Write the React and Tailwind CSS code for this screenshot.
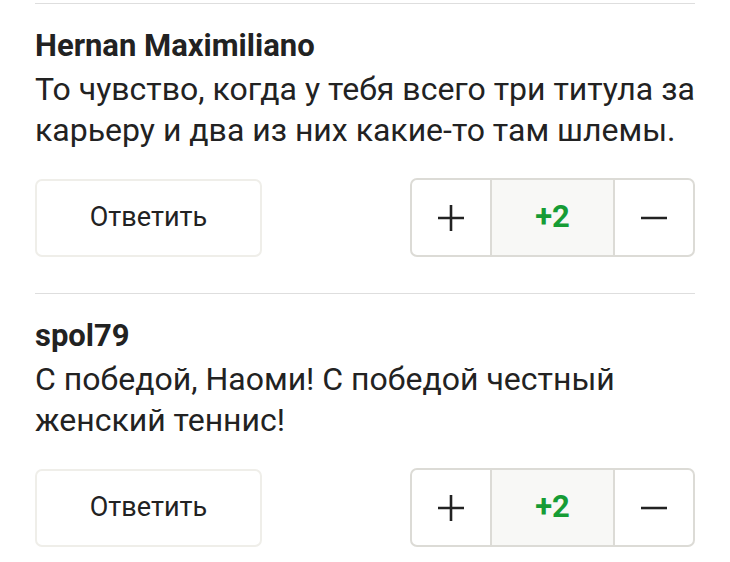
import React from 'react';

const comments = [
  {
    author: 'Hernan Maximiliano',
    text: 'То чувство, когда у тебя всего три титула за карьеру и два из них какие-то там шлемы.',
    score: '+2',
  },
  {
    author: 'spol79',
    text: 'С победой, Наоми! С победой честный женский теннис!',
    score: '+2',
  },
];

function Comment({ author, text, score }) {
  return (
    <div className="border-t border-[#dedede] pt-[24px] pb-[36px]">
      <div className="text-[31px] leading-[36px] font-bold text-[#222]">{author}</div>
      <p className="mt-[5px] text-[32px] leading-[41px] text-[#222]">{text}</p>
      <div className="mt-[27px] flex items-center justify-between">
        <button className="w-[227px] h-[78px] rounded-[7px] border-2 border-[#efeee9] bg-white text-[27px] text-[#222]">
          Ответить
        </button>
        <div className="flex h-[79px] w-[285px] rounded-[7px] border-2 border-[#dcdbd6] overflow-hidden">
          <button className="w-[78px] flex items-center justify-center">
            <svg width="28" height="28" viewBox="0 0 28 28">
              <path d="M14 1v26M1 14h26" stroke="#222" strokeWidth="2.6" />
            </svg>
          </button>
          <div className="flex-1 flex items-center justify-center bg-[#f8f8f6] border-x-2 border-[#dcdbd6] text-[31px] font-bold text-[#169c35]">
            {score}
          </div>
          <button className="w-[78px] flex items-center justify-center">
            <svg width="28" height="4" viewBox="0 0 28 4">
              <path d="M1 2h26" stroke="#222" strokeWidth="2.6" />
            </svg>
          </button>
        </div>
      </div>
    </div>
  );
}

export default function App() {
  return (
    <div className="bg-white min-h-[562px] pt-[3px] px-[35px] font-['Roboto',sans-serif]">
      {comments.map((c, i) => (
        <Comment key={i} {...c} />
      ))}
    </div>
  );
}
